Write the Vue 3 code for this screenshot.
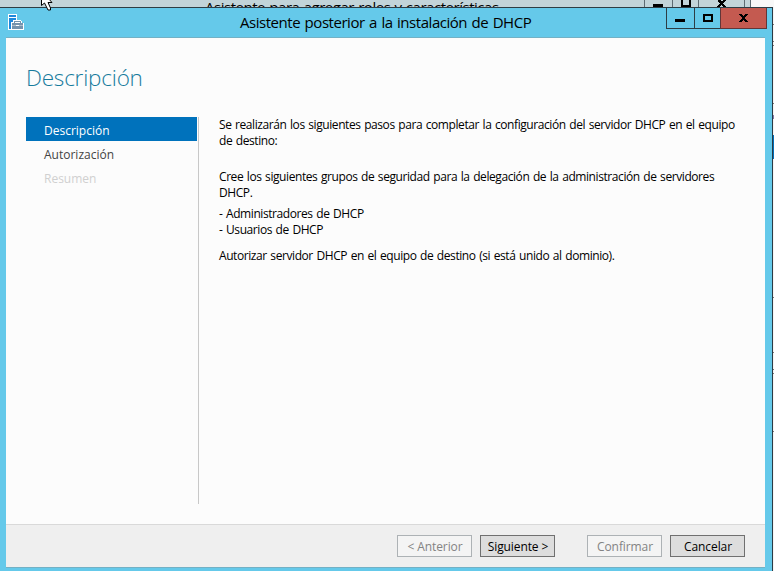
<script setup>
const steps = [
  { label: 'Descripción', state: 'active' },
  { label: 'Autorización', state: 'next' },
  { label: 'Resumen', state: 'disabled' },
]
</script>

<template>
  <div class="screen">
    <div class="behind">
      <div class="behind-bar">
        <span class="behind-title">Asistente para agregar roles y características</span>
        <svg class="behind-controls" width="107" height="7" shape-rendering="crispEdges">
          <path d="M.5 0V7M28.5 0V7M54.5 0V7M100.5 0V7M106.5 0V7" stroke="#5d6b72" fill="none" />
          <path d="M9 4h10v3H9zM37 0h10v7H37z" fill="#000" />
          <path d="M39 0h6v5h-6z" fill="#c2d4d9" />
          <path d="M74 0h3v1h2V0h3v1h-1v1h-1v1h-1v1h1v1h1v1h1v1h-3V6h-1V5h-1v1h-1v1h-3V6h1V5h1V4h1V3h-1V2h-1V1h-1z" fill="#000" />
        </svg>
      </div>
      <svg class="edge" width="1" height="564" shape-rendering="crispEdges">
        <rect width="1" height="564" fill="#f4f4f4" />
        <path d="M0 17h1v1H0zM0 34h1v1H0zM0 38h1v1H0zM0 96h1v1H0zM0 290h1v1H0zM0 345h1v1H0zM0 362h1v1H0zM0 366h1v1H0zM0 424h1v1H0z" fill="#777" />
        <rect y="108" width="1" height="4" fill="#8078a8" />
        <rect y="128" width="1" height="24" fill="#006fba" />
      </svg>
    </div>

    <div class="window">
      <header class="titlebar">
        <svg class="app-icon" width="16" height="16" viewBox="0 0 16 16" shape-rendering="crispEdges">
          <path d="M0 0h9v6h4v1h1v2h2v7H0z" fill="#fff" />
          <path d="M1 1h7v2H1zM1 4h7v2H5v2H3v7H1z" fill="#1e88dc" />
          <path d="M4 9h11v6H4zM6 7h7v1H6zM6 8h1v1H6zM12 8h1v1h-1z" fill="#7593ad" />
          <path d="M4 11h11v1H4z" fill="#a9bccb" />
          <path d="M8 11h3v1H8z" fill="#fff" />
        </svg>
        <h1 class="caption">Asistente posterior a la instalación de DHCP</h1>
        <div class="controls">
          <button class="ctl min" aria-label="Minimizar">
            <svg width="10" height="3" shape-rendering="crispEdges"><rect width="10" height="3" /></svg>
          </button>
          <button class="ctl max" aria-label="Maximizar">
            <svg width="10" height="8" shape-rendering="crispEdges"><path d="M0 0h10v8H0zM2 2v4h6V2z" fill-rule="evenodd" /></svg>
          </button>
          <button class="ctl close" aria-label="Cerrar">
            <svg width="9" height="8" shape-rendering="crispEdges"><path d="M0 0h3v1h1v1h1V1h1V0h3v1H8v1H7v1H6v2h1v1h1v1h1v1H6V7H5V6H4v1H3v1H0V7h1V6h1V5h1V3H2V2H1V1H0z" /></svg>
          </button>
        </div>
      </header>

      <main class="client">
        <h2 class="heading">Descripción</h2>
        <div class="body">
          <nav class="steps">
            <div v-for="s in steps" :key="s.label" class="step" :class="s.state">{{ s.label }}</div>
          </nav>
          <section class="content">
            <p>Se realizarán los siguientes pasos para completar la configuración del servidor DHCP en el equipo<br>de destino:</p>
            <p class="groups">Cree los siguientes grupos de seguridad para la delegación de la administración de servidores<br>DHCP.</p>
            <p class="list">- Administradores de DHCP<br>- Usuarios de DHCP</p>
            <p class="auth">Autorizar servidor DHCP en el equipo de destino (si está unido al dominio).</p>
          </section>
        </div>
        <footer class="footer">
          <button class="btn" disabled>&lt; Anterior</button>
          <button class="btn">Siguiente &gt;</button>
          <button class="btn gap" disabled>Confirmar</button>
          <button class="btn">Cancelar</button>
        </footer>
      </main>
    </div>

    <svg class="cursor" width="12" height="11" viewBox="0 0 12 11">
      <path d="M.5-2V5.500L3.500 3L7 10h2.500V8L7 2.500H11L7-2z" fill="#fff" stroke="#000" />
    </svg>
  </div>
</template>

<style>
body { margin: 0; overflow: hidden; }
</style>

<style scoped>
* { box-sizing: border-box; }
.screen {
  position: relative;
  width: 774px;
  height: 571px;
  overflow: hidden;
  background: #f8f8f8;
  font-family: "Open Sans", "Noto Sans", sans-serif;
  font-size: 12px;
  color: #000;
}
.behind { position: absolute; inset: 0; }
.behind-bar {
  display: flex;
  justify-content: space-between;
  width: 751px;
  height: 7px;
  padding-left: 205px;
  background: #c2d4d9;
  overflow: hidden;
}
.behind-title { font-size: 15px; line-height: 20px; margin-top: -3px; letter-spacing: -0.47px; word-spacing: 0.8px; white-space: nowrap; }
.behind-controls { flex: none; }
.edge { position: absolute; left: 773px; top: 7px; }
.window {
  position: absolute;
  left: 0;
  top: 7px;
  width: 773px;
  height: 564px;
  border-top: 1px solid #2d3d45;
  border-right: 1px solid #2b3a44;
  background: #65c9ea;
}
.titlebar { display: flex; height: 29px; padding: 0 5px 0 8px; }
.app-icon { flex: none; margin-top: 6px; }
.caption {
  flex: 1;
  margin: 0 0 0 216px;
  font-size: 15px;
  font-weight: 400;
  line-height: 29px;
  letter-spacing: -0.46px;
  word-spacing: 1px;
  white-space: nowrap;
}
.controls { display: flex; height: 21px; }
.ctl {
  display: flex;
  align-items: center;
  justify-content: center;
  height: 21px;
  padding: 0;
  border: solid #2d3d45;
  border-width: 0 0 1px 1px;
  background: transparent;
}
.min { width: 28px; padding: 5px 1px 0 0; }
.max { width: 26px; }
.close { width: 47px; background: #c45a50; border-right-width: 1px; border-color: #623638; }
.client {
  display: flex;
  flex-direction: column;
  width: 759px;
  height: 531px;
  margin-left: 6px;
  border-top: 1px solid #73b1c5;
  border-bottom: 1px solid #73b1c5;
  background: #fcfcfc;
}
.heading {
  margin: 21px 0 0 20px;
  height: 58px;
  font-size: 22.5px;
  font-weight: 300;
  line-height: 38px;
  letter-spacing: -0.2px;
  color: #177b9c;
  white-space: nowrap;
}
.body { display: flex; height: 387px; margin-left: 20px; }
.steps { width: 173px; padding-right: 1px; border-right: 1px solid #c8c8c8; }
.step { height: 24px; padding-left: 18px; line-height: 27px; color: #444; }
.active { background: #0072bc; color: #fff; }
.disabled { color: #d0d0d0; }
.content { padding-left: 20px; line-height: 16px; white-space: nowrap; letter-spacing: -0.42px; word-spacing: 0.87px; }
p { margin: 0; }
.groups { margin-top: 20px; }
.list { margin-top: 5px; }
.auth { margin-top: 10px; }
.footer {
  display: flex;
  gap: 8px;
  height: 43px;
  margin-top: 20px;
  padding: 10px 20px 0 391px;
  border-top: 1px solid #d9d9d9;
  background: #efefef;
}
.btn {
  width: 75px;
  height: 22px;
  padding: 1px 0 0 1px;
  border: 1px solid #707070;
  background: #ddd;
  color: #000;
  font: inherit;
  line-height: 19px;
  letter-spacing: -0.1px;
  white-space: nowrap;
}
.btn:disabled { background: #f4f4f4; border-color: #adb2b5; color: #838383; }
.gap { margin-left: 24px; }
.cursor { position: absolute; left: 41px; top: 0; }
</style>
